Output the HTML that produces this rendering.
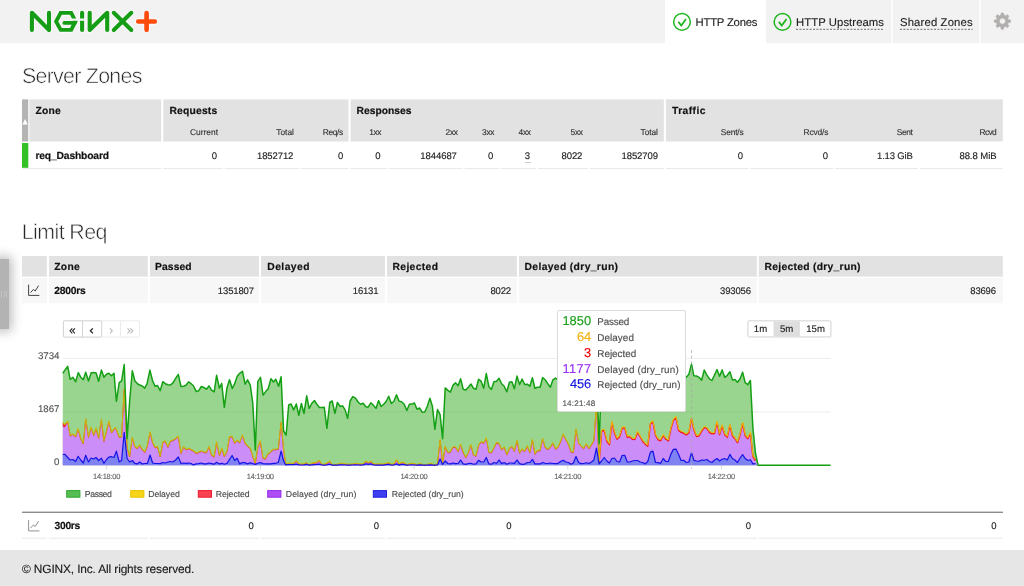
<!DOCTYPE html>
<html lang="en"><head><meta charset="utf-8"><title>NGINX Plus Dashboard</title>
<style>
html,body{margin:0;padding:0;}
body{width:1024px;height:586px;overflow:hidden;position:relative;background:#fff;font-family:"Liberation Sans",sans-serif;}
.a{position:absolute;}
.t{position:absolute;white-space:pre;text-rendering:geometricPrecision;font-family:"Liberation Sans",sans-serif;}
.chart{position:absolute;left:0;top:0;}

</style></head>
<body>
<!-- header -->
<div class="a" style="left:0;top:0;width:1024px;height:43px;background:#f2f2f2;"></div>
<div class="a" style="left:665.3px;top:0;width:101.2px;height:43px;background:#fff;"></div>
<div class="a" style="left:891.2px;top:0;width:2px;height:42.5px;background:#fbfbfb;"></div>
<div class="a" style="left:979.3px;top:0;width:2px;height:42.5px;background:#fbfbfb;"></div>
<!-- logo -->
<svg class="a" style="left:0;top:0" width="180" height="43" viewBox="0 0 180 43">
<g fill="none" stroke="#fafafa" stroke-width="6" stroke-linecap="round" stroke-linejoin="round" opacity="0.9">
<path d="M31.9 30 V12.8 L49 30 V12.8"/>
<path d="M75.5 21.4 L71.2 12.9 L60.7 12.9 L56.1 21.4 L60.7 29.9 L71.2 29.9 Z"/>
<path d="M82.1 12.7 V30"/>
<path d="M89.7 12.8 V30 L107.2 12.8 V30"/>
<path d="M113.8 12.8 L131.3 30 M131.3 12.8 L113.8 30"/>
<path d="M138.3 21.5 H154.8 M146.6 13.2 V29.8" stroke-width="6.6"/>
</g>
<g fill="none" stroke="#159d15" stroke-width="4.1" stroke-linecap="round" stroke-linejoin="round">
<path d="M31.9 30 V12.8 L49 30 V12.8"/>
<path d="M75.5 21.4 L71.2 12.9 L60.7 12.9 L56.1 21.4 L60.7 29.9 L71.2 29.9 Z" stroke-linejoin="miter" stroke-width="3.9"/>
<path d="M82.1 12.7 V30"/>
</g>
<rect x="69" y="18.5" width="17.5" height="2.3" fill="#f2f2f2"/>
<g fill="none" stroke="#159d15" stroke-width="4.1" stroke-linecap="round" stroke-linejoin="round">
<path d="M64.4 22.9 H74.6" stroke-width="3.9"/>
<path d="M89.7 12.8 V30 L107.2 12.8 V30"/>
<path d="M113.8 12.8 L131.3 30 M131.3 12.8 L113.8 30"/>
</g>
<g fill="none" stroke="#ff4b0c" stroke-width="4.7" stroke-linecap="round">
<path d="M138.3 21.5 H154.8 M146.6 13.2 V29.8"/>
</g>
</svg>
<!-- tab icons -->
<svg class="a" style="left:665px;top:8px" width="140" height="30" viewBox="665 8 140 30">
<g fill="none" stroke="#1cb51c">
<circle cx="682" cy="21.9" r="8.35" stroke-width="1.5"/>
<path d="M678.4 21.9 L681.3 25.5 L686 18.9" stroke-width="1.75" stroke-linecap="butt" stroke-linejoin="miter"/>
<circle cx="782.5" cy="21.9" r="8.35" stroke-width="1.5"/>
<path d="M778.9 21.9 L781.8 25.5 L786.5 18.9" stroke-width="1.75" stroke-linecap="butt" stroke-linejoin="miter"/>
</g>
</svg>
<svg class="a" style="left:790px;top:26px" width="200" height="6" viewBox="790 26 200 6"><path d="M796 29.3 H884 M900 29.3 H972.6" stroke="#6c6c6c" stroke-width="1" stroke-dasharray="2 1.4" fill="none"/></svg>

<!-- gear -->
<svg class="a" style="left:991px;top:10px" width="22" height="22" viewBox="-11.4 -11.15 22 22">
<path fill="#b1aeae" stroke="#b1aeae" stroke-width="0.7" stroke-linejoin="round" fill-rule="evenodd" d="M-1.60 -5.78 L-1.06 -8.08 L1.06 -8.08 L1.60 -5.78 L2.95 -5.22 L4.96 -6.47 L6.47 -4.96 L5.22 -2.95 L5.78 -1.60 L8.08 -1.06 L8.08 1.06 L5.78 1.60 L5.22 2.95 L6.47 4.96 L4.96 6.47 L2.95 5.22 L1.60 5.78 L1.06 8.08 L-1.06 8.08 L-1.60 5.78 L-2.95 5.22 L-4.96 6.47 L-6.47 4.96 L-5.22 2.95 L-5.78 1.60 L-8.08 1.06 L-8.08 -1.06 L-5.78 -1.60 L-5.22 -2.95 L-6.47 -4.96 L-4.96 -6.47 L-2.95 -5.22 Z M0 -3.05 A3.05 3.05 0 1 0 0 3.05 A3.05 3.05 0 1 0 0 -3.05 Z"/>
</svg>

<!-- side handle -->
<div class="a" style="left:-4px;top:259px;width:12.5px;height:69.5px;background:#b3b3b3;box-shadow:0 0 12px 2px rgba(0,0,0,0.3);"></div>
<div class="a" style="left:1px;top:290.5px;width:1px;height:7px;background:#c2c2c2;"></div>
<div class="a" style="left:3.5px;top:290.5px;width:1px;height:7px;background:#c2c2c2;"></div>
<div class="a" style="left:6px;top:290.5px;width:1px;height:7px;background:#c2c2c2;"></div>

<!-- tables (boxes) -->
<svg class="a" style="left:0;top:0" width="1024" height="586" viewBox="0 0 1024 586">
<rect x="22" y="99.4" width="6.3" height="42.1" fill="#b4b4b4"/>
<rect x="28.3" y="99.4" width="1.6" height="42.1" fill="#eeeeee"/>
<rect x="29.9" y="99.4" width="131.3" height="42.1" fill="#e2e2e2"/>
<rect x="163.3" y="99.4" width="185.2" height="42.1" fill="#e2e2e2"/>
<rect x="350.6" y="99.4" width="313.2" height="42.1" fill="#e2e2e2"/>
<rect x="665.9" y="99.4" width="336.9" height="42.1" fill="#e2e2e2"/>
<rect x="22" y="143" width="6.3" height="24.8" fill="#35c026"/>
<rect x="23" y="168" width="138.3" height="1" fill="#e9e9e9"/>
<rect x="163.3" y="168" width="59.5" height="1" fill="#e9e9e9"/>
<rect x="224.8" y="168" width="73.9" height="1" fill="#e9e9e9"/>
<rect x="300.7" y="168" width="47.8" height="1" fill="#e9e9e9"/>
<rect x="350.5" y="168" width="36" height="1" fill="#e9e9e9"/>
<rect x="388.5" y="168" width="74.1" height="1" fill="#e9e9e9"/>
<rect x="464.6" y="168" width="34.8" height="1" fill="#e9e9e9"/>
<rect x="501.4" y="168" width="34.5" height="1" fill="#e9e9e9"/>
<rect x="537.9" y="168" width="49.9" height="1" fill="#e9e9e9"/>
<rect x="589.8" y="168" width="74" height="1" fill="#e9e9e9"/>
<rect x="665.8" y="168" width="82.7" height="1" fill="#e9e9e9"/>
<rect x="750.5" y="168" width="82.8" height="1" fill="#e9e9e9"/>
<rect x="835.3" y="168" width="82.6" height="1" fill="#e9e9e9"/>
<rect x="919.9" y="168" width="82.7" height="1" fill="#e9e9e9"/>
<rect x="22" y="256" width="24.8" height="20.65" fill="#e2e2e2"/>
<rect x="49" y="256" width="98.8" height="20.65" fill="#e2e2e2"/>
<rect x="149.9" y="256" width="109.1" height="20.65" fill="#e2e2e2"/>
<rect x="261.1" y="256" width="123.8" height="20.65" fill="#e2e2e2"/>
<rect x="387" y="256" width="129.9" height="20.65" fill="#e2e2e2"/>
<rect x="519" y="256" width="237.85" height="20.65" fill="#e2e2e2"/>
<rect x="758.7" y="256" width="244.1" height="20.65" fill="#e2e2e2"/>
<rect x="22" y="277.95" width="24.8" height="25.2" fill="#f7f7f7"/>
<rect x="49" y="277.95" width="98.8" height="25.2" fill="#f7f7f7"/>
<rect x="149.9" y="277.95" width="109.1" height="25.2" fill="#f7f7f7"/>
<rect x="261.1" y="277.95" width="123.8" height="25.2" fill="#f7f7f7"/>
<rect x="387" y="277.95" width="129.9" height="25.2" fill="#f7f7f7"/>
<rect x="519" y="277.95" width="237.85" height="25.2" fill="#f7f7f7"/>
<rect x="758.7" y="277.95" width="244.1" height="25.2" fill="#f7f7f7"/>
<rect x="22" y="511.6" width="981" height="1.4" fill="#8c8c8c"/>
<rect x="22" y="537.7" width="24.8" height="1" fill="#e9e9e9"/>
<rect x="49" y="537.7" width="98.8" height="1" fill="#e9e9e9"/>
<rect x="149.9" y="537.7" width="109.1" height="1" fill="#e9e9e9"/>
<rect x="261.1" y="537.7" width="123.8" height="1" fill="#e9e9e9"/>
<rect x="387" y="537.7" width="129.9" height="1" fill="#e9e9e9"/>
<rect x="519" y="537.7" width="237.85" height="1" fill="#e9e9e9"/>
<rect x="758.7" y="537.7" width="244.1" height="1" fill="#e9e9e9"/>
</svg>
<!-- table 1 -->
<svg class="a" style="left:20px;top:116px" width="10" height="10" viewBox="20 116 10 10"><path d="M22.4 124.6 L25.05 118.9 L27.7 124.6 Z" fill="#fff"/></svg>
<!-- row border segments -->

<div class="a" style="left:525.2px;top:161.6px;width:5.8px;height:1px;background:#cdcdcd;"></div>

<!-- limit req table -->
<!-- chart icons -->
<svg class="a" style="left:27px;top:283px" width="14" height="14" viewBox="0 0 14 14"><path d="M1.6 1.6 V12.4 H12.4" fill="none" stroke="#3a3a3a" stroke-width="0.95"/><path d="M3.6 9.6 L6.4 6.4 L8.2 8 L11.6 2.6" fill="none" stroke="#3a3a3a" stroke-width="0.95"/></svg>
<svg class="a" style="left:27px;top:518px" width="14" height="15" viewBox="0 -0.5 14 15"><path d="M1.6 1.6 V12.4 H12.4" fill="none" stroke="#8c8c8c" stroke-width="0.95"/><path d="M3.6 9.6 L6.4 6.4 L8.2 8 L11.6 2.6" fill="none" stroke="#8c8c8c" stroke-width="0.95"/></svg>

<!-- chart -->
<svg class="chart" width="1024" height="586" viewBox="0 0 1024 586">
<line x1="62.5" x2="830.6" y1="358.4" y2="358.4" stroke="#eeeeee" stroke-width="1"/>
<line x1="62.5" x2="830.6" y1="411.9" y2="411.9" stroke="#eeeeee" stroke-width="1"/>
<line x1="106.7" x2="106.7" y1="465.5" y2="469.3" stroke="#d9d9d9" stroke-width="1"/>
<line x1="260.4" x2="260.4" y1="465.5" y2="469.3" stroke="#d9d9d9" stroke-width="1"/>
<line x1="414.1" x2="414.1" y1="465.5" y2="469.3" stroke="#d9d9d9" stroke-width="1"/>
<line x1="567.8" x2="567.8" y1="465.5" y2="469.3" stroke="#d9d9d9" stroke-width="1"/>
<line x1="721.5" x2="721.5" y1="465.5" y2="469.3" stroke="#d9d9d9" stroke-width="1"/>
<path d="M62.8 373.3 L65.0 369.9 L67.7 366.4 L70.2 379.3 L72.9 377.3 L75.6 381.7 L78.3 372.6 L80.8 377.3 L83.3 379.8 L85.7 372.3 L88.5 380.9 L91.2 372.8 L93.7 372.6 L96.1 373.0 L98.6 381.2 L101.4 370.1 L103.9 377.3 L106.5 374.3 L108.8 373.3 L111.5 375.8 L114.0 373.3 L116.4 401.3 L119.2 382.7 L121.6 380.9 L124.2 364.6 L127.1 438.7 L129.7 400.5 L132.3 370.8 L134.8 380.7 L137.7 384.0 L139.7 385.0 L141.7 385.7 L144.7 388.2 L147.1 383.7 L149.9 370.1 L152.6 380.7 L155.1 386.2 L157.5 385.5 L160.2 390.6 L162.8 381.7 L165.4 383.7 L167.9 384.7 L170.4 384.9 L172.8 383.2 L175.6 378.3 L178.3 374.3 L181.0 386.5 L183.5 386.2 L186.0 385.2 L188.5 381.9 L191.2 383.7 L193.4 385.7 L196.1 391.4 L198.6 390.8 L201.3 386.5 L203.8 387.5 L206.5 389.2 L209.0 385.9 L211.5 390.1 L214.2 391.8 L216.6 375.3 L219.4 388.2 L221.7 383.4 L224.3 407.5 L227.0 387.7 L229.5 379.8 L232.3 388.5 L234.7 383.7 L237.2 376.3 L239.7 373.3 L242.5 371.3 L245.1 384.2 L247.6 379.8 L250.3 385.2 L252.8 403.5 L255.3 450.1 L257.8 381.7 L260.5 377.3 L263.1 395.1 L265.7 391.6 L268.2 388.7 L270.9 378.8 L273.5 381.9 L275.8 379.3 L278.6 386.2 L281.1 376.8 L283.6 431.0 L286.1 435.2 L288.7 405.0 L291.1 404.0 L293.6 409.9 L296.3 404.0 L298.8 415.4 L301.4 403.5 L304.0 413.4 L306.7 395.8 L309.2 408.5 L311.7 403.5 L314.4 400.5 L316.9 404.3 L319.4 407.5 L321.8 407.5 L324.3 407.3 L326.9 428.3 L329.8 402.5 L332.2 401.0 L334.9 413.4 L337.4 402.5 L340.2 406.5 L342.6 405.8 L345.1 409.9 L347.6 418.4 L350.1 401.0 L352.8 396.6 L355.5 398.1 L358.1 402.0 L360.6 404.3 L363.2 403.3 L365.8 406.7 L368.1 407.2 L370.9 402.8 L373.4 405.2 L376.0 408.4 L378.6 400.6 L381.1 406.5 L383.7 404.3 L386.3 401.3 L388.7 396.3 L391.4 403.5 L393.9 401.3 L396.5 394.9 L399.1 401.1 L401.6 401.8 L404.2 404.3 L406.8 410.5 L409.4 404.3 L411.9 404.1 L414.4 403.0 L417.0 409.2 L419.6 408.0 L422.1 412.2 L424.7 412.0 L427.3 406.2 L429.9 398.3 L432.4 406.2 L434.9 429.3 L437.5 409.5 L440.1 414.6 L442.6 438.7 L445.2 387.9 L447.8 390.4 L450.4 392.1 L452.9 385.4 L455.5 382.8 L458.1 385.7 L460.6 378.8 L463.2 389.2 L465.8 390.1 L468.4 387.2 L470.9 384.0 L473.4 388.2 L476.0 389.2 L478.6 379.3 L481.1 381.2 L483.7 388.2 L486.3 373.6 L488.9 386.7 L491.4 389.5 L493.9 381.7 L496.5 381.2 L499.1 378.3 L501.6 383.7 L504.2 386.2 L506.8 391.8 L509.4 382.2 L511.9 381.7 L514.4 388.7 L517.0 376.1 L519.6 384.5 L522.1 379.1 L524.7 384.5 L527.3 384.2 L529.9 386.2 L532.4 377.8 L534.9 388.2 L537.5 387.2 L540.1 387.2 L542.6 377.6 L545.2 379.8 L547.8 383.7 L550.4 387.2 L552.9 379.8 L555.5 378.1 L558.1 379.8 L560.6 383.7 L563.2 378.8 L565.8 384.7 L568.4 382.7 L570.9 379.8 L573.4 384.7 L576.0 377.8 L578.6 383.7 L581.1 384.7 L583.7 380.7 L586.3 382.7 L588.9 384.7 L591.5 379.8 L593.9 378.8 L596.5 366.9 L599.1 443.7 L601.6 374.8 L604.2 372.8 L606.8 377.8 L609.4 379.8 L611.9 371.8 L614.4 374.8 L617.0 377.8 L619.6 375.8 L622.1 372.8 L624.7 371.8 L627.3 376.8 L629.9 376.3 L632.4 377.8 L634.9 377.3 L637.5 373.8 L640.1 374.8 L642.6 376.8 L645.2 378.8 L647.8 377.8 L650.4 369.9 L652.9 368.9 L655.5 373.8 L658.1 374.8 L660.6 372.8 L663.2 375.8 L665.8 377.8 L668.4 376.3 L670.9 373.8 L673.4 370.8 L676.0 372.8 L678.6 377.8 L681.1 378.8 L683.7 378.3 L686.3 377.3 L688.9 374.3 L691.5 364.1 L693.9 375.8 L696.5 376.0 L699.1 377.3 L701.6 380.2 L704.2 370.1 L706.8 374.8 L709.4 378.8 L711.9 380.5 L714.4 375.3 L717.0 369.6 L719.6 376.3 L722.1 369.9 L724.7 377.3 L727.3 375.3 L729.9 371.8 L732.4 379.9 L734.9 379.6 L737.5 382.2 L740.1 378.8 L742.6 372.3 L745.2 382.7 L747.8 384.7 L750.4 380.5 L752.9 428.0 L755.5 453.5 L758.1 465.2 L758.1 465.2 L62.8 465.2 Z" fill="#99d58f"/>
<path d="M62.8 423.4 L65.0 425.3 L67.7 421.9 L70.2 436.2 L72.9 434.8 L75.6 437.2 L78.1 429.3 L80.8 439.2 L83.3 444.1 L85.7 419.4 L88.5 437.7 L91.0 427.8 L93.7 435.7 L96.1 428.8 L98.6 438.7 L101.4 419.9 L103.9 441.7 L106.5 431.8 L108.8 421.9 L111.5 433.3 L114.0 429.8 L115.6 428.3 L119.2 437.7 L121.6 437.2 L124.2 389.7 L127.1 448.1 L129.6 457.0 L132.3 438.2 L134.8 447.1 L137.2 449.1 L139.7 445.6 L142.2 450.1 L144.9 452.6 L147.4 446.1 L150.1 432.8 L152.6 443.2 L155.1 448.1 L157.5 447.1 L160.2 457.0 L162.8 443.2 L165.1 441.7 L167.9 447.6 L170.4 441.7 L172.8 441.0 L175.6 439.2 L178.3 437.0 L181.0 453.9 L183.5 447.3 L186.0 450.3 L188.5 449.1 L191.2 450.1 L193.4 451.6 L196.1 453.6 L198.6 452.9 L201.3 451.6 L203.8 452.6 L206.5 453.1 L209.0 447.1 L211.5 455.5 L214.2 457.2 L216.6 442.7 L219.4 455.8 L221.9 448.9 L224.3 456.8 L227.0 452.1 L229.5 437.4 L232.1 437.2 L234.7 443.7 L237.2 441.0 L239.7 443.2 L242.5 435.7 L245.1 443.7 L247.6 446.6 L250.3 449.1 L252.8 457.0 L255.3 464.0 L257.8 448.1 L260.3 441.7 L262.9 458.5 L265.4 459.5 L267.9 454.6 L270.6 452.6 L273.3 450.1 L275.8 449.9 L278.3 449.6 L281.1 422.9 L283.5 449.1 L285.7 464.9 L288.7 464.0 L291.1 464.1 L293.6 464.0 L296.3 461.5 L298.8 464.4 L301.4 464.8 L304.0 464.4 L306.5 463.5 L309.2 465.4 L311.7 464.0 L314.4 463.5 L316.9 463.0 L319.4 461.2 L321.8 464.9 L324.3 465.1 L326.9 464.0 L329.5 462.0 L332.2 465.1 L334.9 465.4 L337.4 464.9 L340.2 464.1 L342.6 464.1 L345.1 464.6 L347.6 464.9 L350.1 464.9 L352.8 464.6 L355.5 464.1 L358.1 464.6 L360.6 464.8 L363.2 464.4 L365.8 462.0 L368.4 463.5 L370.9 462.0 L373.4 464.4 L376.0 464.9 L378.6 464.8 L381.1 464.6 L383.7 464.9 L386.3 464.0 L388.9 463.5 L391.4 465.1 L393.9 464.4 L396.5 460.5 L399.1 464.8 L401.6 463.0 L404.2 463.5 L406.8 465.7 L409.4 464.4 L411.9 464.1 L414.4 464.4 L417.0 465.7 L419.6 464.1 L422.1 465.1 L424.7 465.7 L427.3 465.4 L429.9 464.1 L432.4 464.8 L434.9 465.7 L437.5 464.4 L440.1 440.2 L442.6 464.4 L445.2 447.1 L447.8 453.1 L450.4 452.6 L452.9 447.6 L455.5 447.6 L458.1 452.1 L460.6 444.9 L463.2 453.1 L465.8 458.0 L468.4 453.1 L470.9 445.3 L473.4 455.2 L476.0 456.5 L478.6 445.6 L481.1 442.4 L483.7 443.7 L486.3 438.7 L488.9 452.9 L491.4 453.1 L493.9 448.6 L496.5 443.2 L499.1 444.1 L501.6 450.3 L504.2 447.6 L506.8 455.2 L509.4 449.1 L511.9 446.9 L514.4 451.6 L517.0 441.0 L519.6 453.6 L522.1 449.6 L524.7 451.9 L527.3 446.6 L529.9 453.1 L532.4 440.2 L534.9 454.6 L537.5 451.1 L540.1 451.1 L542.6 439.2 L545.2 448.1 L547.8 449.9 L550.4 447.6 L552.9 443.7 L555.5 449.6 L558.1 447.6 L560.6 442.2 L563.2 434.8 L565.8 440.2 L568.4 444.6 L570.9 452.1 L573.4 452.9 L576.0 429.8 L578.6 443.7 L581.1 446.6 L583.7 449.1 L586.3 444.6 L588.9 449.1 L591.5 445.1 L593.9 441.2 L596.5 404.6 L599.1 463.0 L601.6 431.8 L604.2 430.8 L606.8 441.7 L609.4 445.1 L611.9 422.9 L614.4 433.3 L617.0 439.7 L619.6 437.2 L622.1 428.8 L624.7 428.3 L627.3 437.7 L629.9 437.2 L632.4 439.7 L634.9 440.0 L637.5 432.8 L640.1 437.2 L642.6 441.7 L645.2 444.6 L647.8 446.6 L650.4 424.4 L652.9 422.4 L655.5 435.7 L658.1 440.2 L660.6 441.2 L663.2 436.0 L665.8 439.7 L668.4 441.4 L670.9 429.3 L673.4 420.9 L676.0 417.9 L678.6 430.8 L681.1 432.8 L683.7 433.8 L686.3 435.4 L688.9 433.3 L691.5 418.9 L693.9 430.3 L696.5 437.0 L699.1 436.2 L701.6 431.8 L704.2 428.1 L706.8 428.8 L709.4 432.8 L711.9 434.2 L714.4 434.1 L717.0 422.9 L719.6 435.0 L722.1 426.3 L724.7 435.2 L727.3 437.7 L729.9 425.8 L732.4 436.2 L734.9 439.2 L737.5 443.2 L740.1 435.2 L742.6 423.9 L745.2 436.2 L747.8 439.2 L750.4 433.8 L752.9 457.0 L755.5 461.0 L758.1 465.5 L758.1 465.2 L62.8 465.2 Z" fill="#cb8df7"/>
<path d="M62.8 454.5 L65.0 454.4 L67.7 457.5 L70.2 460.0 L72.9 459.5 L75.6 461.5 L78.1 456.3 L80.8 460.0 L83.3 463.0 L85.7 455.3 L88.5 462.0 L91.0 458.0 L93.7 459.0 L96.1 457.5 L98.6 460.5 L101.4 458.2 L103.9 463.3 L106.5 459.5 L108.8 457.2 L111.5 456.7 L114.0 457.5 L116.4 451.1 L119.2 462.0 L121.6 460.5 L124.2 432.3 L127.1 458.5 L129.6 462.0 L132.3 460.5 L134.8 463.3 L137.2 463.9 L139.7 462.0 L142.2 463.9 L144.9 463.5 L147.4 463.5 L150.1 455.0 L152.6 463.0 L155.1 463.3 L157.5 463.5 L160.2 463.6 L162.8 462.5 L165.1 463.0 L167.9 462.0 L170.4 461.5 L172.8 462.0 L175.6 460.0 L178.3 457.0 L181.0 463.5 L183.5 463.0 L186.0 463.3 L188.5 463.0 L191.2 463.5 L193.4 464.9 L196.1 463.9 L198.6 463.6 L201.3 463.0 L203.8 463.9 L206.5 463.9 L209.0 463.0 L211.5 463.6 L214.2 464.2 L216.6 462.3 L219.4 463.9 L221.9 463.3 L224.3 464.2 L227.0 463.3 L229.5 459.5 L232.1 455.5 L234.7 460.5 L237.2 458.3 L239.7 463.9 L242.5 462.5 L245.1 462.7 L247.6 463.9 L250.3 462.7 L252.8 463.6 L255.3 464.4 L257.8 463.3 L260.3 462.5 L262.9 463.6 L265.4 463.9 L267.9 463.9 L270.6 463.8 L273.3 463.3 L275.8 463.3 L278.3 462.5 L281.1 451.1 L283.5 460.5 L285.7 464.9 L288.7 464.6 L291.1 464.7 L293.6 464.6 L296.3 464.1 L298.8 464.9 L301.4 465.0 L304.0 464.9 L306.5 464.4 L309.2 465.2 L311.7 464.8 L314.4 464.6 L316.9 464.4 L319.4 464.1 L321.8 465.0 L324.3 465.1 L326.9 464.8 L329.5 464.2 L332.2 465.1 L334.9 465.2 L337.4 465.1 L340.2 464.9 L342.6 464.9 L345.1 465.0 L347.6 465.1 L350.1 465.1 L352.8 465.0 L355.5 464.9 L358.1 465.0 L360.6 465.1 L363.2 464.9 L365.8 463.9 L368.4 464.4 L370.9 463.9 L373.4 465.0 L376.0 465.2 L378.6 465.1 L381.1 465.0 L383.7 465.2 L386.3 464.6 L388.9 464.4 L391.4 465.2 L393.9 465.0 L396.5 463.9 L399.1 465.1 L401.6 464.4 L404.2 464.6 L406.8 465.2 L409.4 465.0 L411.9 464.9 L414.4 465.0 L417.0 465.2 L419.6 464.9 L422.1 465.2 L424.7 465.2 L427.3 465.2 L429.9 464.9 L432.4 465.1 L434.9 465.2 L437.5 465.0 L440.1 459.0 L442.6 464.4 L445.2 461.0 L447.8 463.5 L450.4 463.9 L452.9 463.0 L455.5 463.6 L458.1 463.5 L460.6 460.0 L463.2 463.9 L465.8 464.4 L468.4 463.5 L470.9 463.3 L473.4 464.2 L476.0 463.9 L478.6 460.3 L481.1 462.0 L483.7 462.0 L486.3 457.5 L488.9 463.9 L491.4 464.2 L493.9 462.5 L496.5 463.3 L499.1 460.0 L501.6 463.6 L504.2 462.5 L506.8 464.2 L509.4 463.0 L511.9 463.0 L514.4 463.3 L517.0 460.0 L519.6 463.6 L522.1 464.4 L524.7 464.2 L527.3 462.5 L529.9 462.5 L532.4 459.3 L534.9 463.9 L537.5 463.9 L540.1 463.9 L542.6 462.5 L545.2 463.3 L547.8 463.5 L550.4 463.0 L552.9 463.5 L555.5 463.6 L558.1 463.3 L560.6 461.5 L563.2 460.3 L565.8 462.0 L568.4 462.5 L570.9 464.2 L573.4 463.0 L576.0 456.5 L578.6 462.5 L581.1 463.6 L583.7 463.5 L586.3 462.7 L588.9 463.5 L591.5 462.0 L593.9 460.0 L596.5 448.1 L599.1 463.9 L601.6 461.0 L604.2 457.5 L606.8 461.0 L609.4 463.0 L611.9 458.5 L614.4 458.0 L617.0 461.5 L619.6 462.0 L622.1 455.5 L624.7 455.3 L627.3 462.0 L629.9 462.0 L632.4 461.0 L634.9 460.5 L637.5 460.5 L640.1 462.0 L642.6 462.5 L645.2 463.9 L647.8 461.5 L650.4 452.1 L652.9 451.1 L655.5 462.5 L658.1 462.7 L660.6 463.3 L663.2 458.5 L665.8 461.5 L668.4 461.5 L670.9 454.1 L673.4 449.4 L676.0 449.1 L678.6 454.5 L681.1 460.5 L683.7 460.3 L686.3 462.5 L688.9 462.0 L691.5 452.6 L693.9 460.3 L696.5 461.0 L699.1 461.3 L701.6 460.0 L704.2 460.3 L706.8 459.5 L709.4 461.5 L711.9 462.5 L714.4 460.3 L717.0 458.5 L719.6 461.0 L722.1 459.3 L724.7 458.5 L727.3 460.0 L729.9 454.4 L732.4 458.5 L734.9 460.0 L737.5 462.5 L740.1 458.0 L742.6 454.7 L745.2 458.5 L747.8 460.5 L750.4 459.7 L752.9 463.9 L755.5 463.5 L758.1 465.0 L758.1 465.2 L62.8 465.2 Z" fill="#7f82f1"/>
<path d="M62.8 423.1 L64.95 425.0 L67.72 421.6 L67.72 422.2 L64.95 427.6 L62.8 426.8 Z" fill="#f22a3e"/>
<path d="M62.8 423.3 L65.0 425.2 L67.7 421.8 L70.2 436.1 L72.9 434.6 L75.6 437.1 L78.1 429.2 L80.8 439.1 L83.3 444.0 L85.7 419.3 L88.5 437.6 L91.0 427.7 L93.7 435.6 L96.1 428.7 L98.6 438.6 L101.4 419.8 L103.9 441.6 L106.5 431.7 L108.8 421.8 L111.5 433.2 L114.0 429.7 L115.6 428.2 L119.2 437.6 L121.6 437.1 L124.2 389.6 L127.1 448.0 L129.6 456.9 L132.3 438.1 L134.8 447.0 L137.2 449.0 L139.7 445.5 L142.2 450.0 L144.9 452.5 L147.4 446.0 L150.1 432.7 L152.6 443.1 L155.1 448.0 L157.5 447.0 L160.2 456.9 L162.8 443.1 L165.1 441.6 L167.9 447.5 L170.4 441.6 L172.8 440.9 L175.6 439.1 L178.3 436.9 L181.0 453.8 L183.5 447.2 L186.0 450.2 L188.5 449.0 L191.2 450.0 L193.4 451.5 L196.1 453.5 L198.6 452.8 L201.3 451.5 L203.8 452.5 L206.5 453.0 L209.0 447.0 L211.5 455.4 L214.2 457.1 L216.6 442.6 L219.4 455.7 L221.9 448.8 L224.3 456.7 L227.0 452.0 L229.5 437.3 L232.1 437.1 L234.7 443.6 L237.2 440.9 L239.7 443.1 L242.5 435.6 L245.1 443.6 L247.6 446.5 L250.3 449.0 L252.8 456.9 L255.3 463.9 L257.8 448.0 L260.3 441.6 L262.9 458.4 L265.4 459.4 L267.9 454.4 L270.6 452.5 L273.3 450.0 L275.8 449.8 L278.3 449.5 L281.1 422.8 L283.5 449.0 L285.7 464.8 L288.7 463.9 L291.1 464.0 L293.6 463.9 L296.3 461.4 L298.8 464.3 L301.4 464.6 L304.0 464.3 L306.5 463.4 L309.2 465.3 L311.7 463.9 L314.4 463.4 L316.9 462.9 L319.4 461.1 L321.8 464.8 L324.3 465.0 L326.9 463.9 L329.5 461.9 L332.2 465.0 L334.9 465.3 L337.4 464.8 L340.2 464.0 L342.6 464.0 L345.1 464.4 L347.6 464.8 L350.1 464.8 L352.8 464.4 L355.5 464.0 L358.1 464.4 L360.6 464.6 L363.2 464.3 L365.8 461.9 L368.4 463.4 L370.9 461.9 L373.4 464.3 L376.0 464.8 L378.6 464.6 L381.1 464.4 L383.7 464.8 L386.3 463.9 L388.9 463.4 L391.4 465.0 L393.9 464.3 L396.5 460.4 L399.1 464.6 L401.6 462.9 L404.2 463.4 L406.8 465.6 L409.4 464.3 L411.9 464.0 L414.4 464.3 L417.0 465.6 L419.6 464.0 L422.1 465.0 L424.7 465.6 L427.3 465.3 L429.9 464.0 L432.4 464.6 L434.9 465.6 L437.5 464.3 L440.1 440.1 L442.6 464.3 L445.2 447.0 L447.8 453.0 L450.4 452.5 L452.9 447.5 L455.5 447.5 L458.1 452.0 L460.6 444.8 L463.2 453.0 L465.8 457.9 L468.4 453.0 L470.9 445.2 L473.4 455.1 L476.0 456.4 L478.6 445.5 L481.1 442.3 L483.7 443.6 L486.3 438.6 L488.9 452.8 L491.4 453.0 L493.9 448.5 L496.5 443.1 L499.1 444.0 L501.6 450.2 L504.2 447.5 L506.8 455.1 L509.4 449.0 L511.9 446.8 L514.4 451.5 L517.0 440.9 L519.6 453.5 L522.1 449.5 L524.7 451.8 L527.3 446.5 L529.9 453.0 L532.4 440.1 L534.9 454.4 L537.5 451.0 L540.1 451.0 L542.6 439.1 L545.2 448.0 L547.8 449.8 L550.4 447.5 L552.9 443.6 L555.5 449.5 L558.1 447.5 L560.6 442.1 L563.2 434.6 L565.8 440.1 L568.4 444.5 L570.9 452.0 L573.4 452.8 L576.0 429.7 L578.6 443.6 L581.1 446.5 L583.7 449.0 L586.3 444.5 L588.9 449.0 L591.5 445.0 L593.9 441.1 L596.5 404.4 L599.1 462.9" fill="none" stroke="#f0203c" stroke-width="0.8" stroke-linejoin="round"/>
<path d="M599.1 462.5 L601.6 431.3 L604.2 430.3 L606.8 441.2 L609.4 444.6 L611.9 422.4 L614.4 432.8 L617.0 439.2 L619.6 436.7 L622.1 428.3 L624.7 427.8 L627.3 437.2 L629.9 436.7 L632.4 439.2 L634.9 439.5 L637.5 432.3 L640.1 436.7 L642.6 441.2 L645.2 444.1 L647.8 446.1 L650.4 423.9 L652.9 421.9 L655.5 435.2 L658.1 439.7 L660.6 440.7 L663.2 435.5 L665.8 439.2 L668.4 440.9 L670.9 428.8 L673.4 420.4 L676.0 417.4 L678.6 430.3 L681.1 432.3 L683.7 433.3 L686.3 434.9 L688.9 432.8 L691.5 418.4 L693.9 429.8 L696.5 436.5 L699.1 435.7 L701.6 431.3 L704.2 427.6 L706.8 428.3 L709.4 432.3 L711.9 433.8 L714.4 433.6 L717.0 422.4 L719.6 434.5 L722.1 425.8 L724.7 434.7 L727.3 437.2 L729.9 425.3 L732.4 435.7 L734.9 438.7 L737.5 442.7 L740.1 434.7 L742.6 423.4 L745.2 435.7 L747.8 438.7 L750.4 433.3 L752.9 456.5 L755.5 460.5" fill="none" stroke="#f4142e" stroke-width="1.5" stroke-linejoin="round"/>
<path d="M62.8 422.5 L65.0 424.5 L67.7 421.0 L70.2 435.4 L72.9 433.9 L75.6 436.4 L78.1 428.4 L80.8 438.3 L83.3 443.3 L85.7 418.5 L88.5 436.9 L91.0 427.0 L93.7 434.9 L96.1 428.0 L98.6 437.9 L101.4 419.0 L103.9 440.8 L106.5 430.9 L108.8 421.0 L111.5 432.4 L114.0 428.9 L115.6 427.5 L119.2 436.9 L121.6 436.4 L124.2 388.8 L127.1 447.3 L129.6 456.2 L132.3 437.4 L134.8 446.3 L137.2 448.2 L139.7 444.8 L142.2 449.2 L144.9 451.7 L147.4 445.3 L150.1 431.9 L152.6 442.3 L155.1 447.3 L157.5 446.3 L160.2 456.2 L162.8 442.3 L165.1 440.8 L167.9 446.8 L170.4 440.8 L172.8 440.1 L175.6 438.3 L178.3 436.2 L181.0 453.0 L183.5 446.5 L186.0 449.4 L188.5 448.2 L191.2 449.2 L193.4 450.7 L196.1 452.7 L198.6 452.0 L201.3 450.7 L203.8 451.7 L206.5 452.2 L209.0 446.3 L211.5 454.7 L214.2 456.4 L216.6 441.8 L219.4 455.0 L221.9 448.1 L224.3 456.0 L227.0 451.2 L229.5 436.6 L232.1 436.4 L234.7 442.8 L237.2 440.1 L239.7 442.3 L242.5 434.9 L245.1 442.8 L247.6 445.8 L250.3 448.2 L252.8 456.2 L255.3 463.1 L257.8 447.3 L260.3 440.8 L262.9 457.7 L265.4 458.6 L267.9 453.7 L270.6 451.7 L273.3 449.2 L275.8 449.0 L278.3 448.8 L281.1 422.0 L283.5 448.2 L285.7 464.1 L288.7 463.1 L291.1 463.3 L293.6 463.1 L296.3 460.6 L298.8 463.6 L301.4 463.9 L304.0 463.6 L306.5 462.6 L309.2 464.6 L311.7 463.1 L314.4 462.6 L316.9 462.1 L319.4 460.3 L321.8 464.1 L324.3 464.3 L326.9 463.1 L329.5 461.1 L332.2 464.3 L334.9 464.6 L337.4 464.1 L340.2 463.3 L342.6 463.3 L345.1 463.7 L347.6 464.1 L350.1 464.1 L352.8 463.7 L355.5 463.3 L358.1 463.7 L360.6 463.9 L363.2 463.6 L365.8 461.1 L368.4 462.6 L370.9 461.1 L373.4 463.6 L376.0 464.1 L378.6 463.9 L381.1 463.7 L383.7 464.1 L386.3 463.1 L388.9 462.6 L391.4 464.3 L393.9 463.6 L396.5 459.6 L399.1 463.9 L401.6 462.1 L404.2 462.6 L406.8 464.8 L409.4 463.6 L411.9 463.3 L414.4 463.6 L417.0 464.8 L419.6 463.3 L422.1 464.3 L424.7 464.8 L427.3 464.6 L429.9 463.3 L432.4 463.9 L434.9 464.8 L437.5 463.6 L440.1 439.3 L442.6 463.6 L445.2 446.3 L447.8 452.2 L450.4 451.7 L452.9 446.8 L455.5 446.8 L458.1 451.2 L460.6 444.1 L463.2 452.2 L465.8 457.2 L468.4 452.2 L470.9 444.5 L473.4 454.4 L476.0 455.7 L478.6 444.8 L481.1 441.5 L483.7 442.8 L486.3 437.9 L488.9 452.0 L491.4 452.2 L493.9 447.8 L496.5 442.3 L499.1 443.3 L501.6 449.4 L504.2 446.8 L506.8 454.4 L509.4 448.2 L511.9 446.1 L514.4 450.7 L517.0 440.1 L519.6 452.7 L522.1 448.8 L524.7 451.0 L527.3 445.8 L529.9 452.2 L532.4 439.3 L534.9 453.7 L537.5 450.2 L540.1 450.2 L542.6 438.3 L545.2 447.3 L547.8 449.0 L550.4 446.8 L552.9 442.8 L555.5 448.8 L558.1 446.8 L560.6 441.3 L563.2 433.9 L565.8 439.3 L568.4 443.8 L570.9 451.2 L573.4 452.0 L576.0 428.9 L578.6 442.8 L581.1 445.8 L583.7 448.2 L586.3 443.8 L588.9 448.2 L591.5 444.3 L593.9 440.3 L596.5 403.7 L599.1 462.1" fill="none" stroke="#c9b800" stroke-width="1.1" stroke-linejoin="round" opacity="0.95"/>
<path d="M599.1 461.3 L601.6 430.1 L604.2 429.1 L606.8 440.0 L609.4 443.5 L611.9 421.2 L614.4 431.6 L617.0 438.1 L619.6 435.6 L622.1 427.2 L624.7 426.7 L627.3 436.1 L629.9 435.6 L632.4 438.1 L634.9 438.4 L637.5 431.1 L640.1 435.6 L642.6 440.0 L645.2 443.0 L647.8 445.0 L650.4 422.7 L652.9 420.7 L655.5 434.1 L658.1 438.5 L660.6 439.5 L663.2 434.4 L665.8 438.1 L668.4 439.7 L670.9 427.7 L673.4 419.2 L676.0 416.3 L678.6 429.1 L681.1 431.1 L683.7 432.1 L686.3 433.8 L688.9 431.6 L691.5 417.3 L693.9 428.6 L696.5 435.4 L699.1 434.6 L701.6 430.1 L704.2 426.5 L706.8 427.2 L709.4 431.1 L711.9 432.6 L714.4 432.4 L717.0 421.2 L719.6 433.4 L722.1 424.7 L724.7 433.6 L727.3 436.1 L729.9 424.2 L732.4 434.6 L734.9 437.6 L737.5 441.5 L740.1 433.6 L742.6 422.2 L745.2 434.6 L747.8 437.6 L750.4 432.1 L752.9 455.4 L755.5 459.3" fill="none" stroke="#e8c400" stroke-width="1.1" stroke-linejoin="round" opacity="0.92"/>
<path d="M62.8 454.5 L65.0 454.4 L67.7 457.5 L70.2 460.0 L72.9 459.5 L75.6 461.5 L78.1 456.3 L80.8 460.0 L83.3 463.0 L85.7 455.3 L88.5 462.0 L91.0 458.0 L93.7 459.0 L96.1 457.5 L98.6 460.5 L101.4 458.2 L103.9 463.3 L106.5 459.5 L108.8 457.2 L111.5 456.7 L114.0 457.5 L116.4 451.1 L119.2 462.0 L121.6 460.5 L124.2 432.3 L127.1 458.5 L129.6 462.0 L132.3 460.5 L134.8 463.3 L137.2 463.9 L139.7 462.0 L142.2 463.9 L144.9 463.5 L147.4 463.5 L150.1 455.0 L152.6 463.0 L155.1 463.3 L157.5 463.5 L160.2 463.6 L162.8 462.5 L165.1 463.0 L167.9 462.0 L170.4 461.5 L172.8 462.0 L175.6 460.0 L178.3 457.0 L181.0 463.5 L183.5 463.0 L186.0 463.3 L188.5 463.0 L191.2 463.5 L193.4 464.9 L196.1 463.9 L198.6 463.6 L201.3 463.0 L203.8 463.9 L206.5 463.9 L209.0 463.0 L211.5 463.6 L214.2 464.2 L216.6 462.3 L219.4 463.9 L221.9 463.3 L224.3 464.2 L227.0 463.3 L229.5 459.5 L232.1 455.5 L234.7 460.5 L237.2 458.3 L239.7 463.9 L242.5 462.5 L245.1 462.7 L247.6 463.9 L250.3 462.7 L252.8 463.6 L255.3 464.4 L257.8 463.3 L260.3 462.5 L262.9 463.6 L265.4 463.9 L267.9 463.9 L270.6 463.8 L273.3 463.3 L275.8 463.3 L278.3 462.5 L281.1 451.1 L283.5 460.5 L285.7 464.9 L288.7 464.6 L291.1 464.7 L293.6 464.6 L296.3 464.1 L298.8 464.9 L301.4 465.0 L304.0 464.9 L306.5 464.4 L309.2 465.2 L311.7 464.8 L314.4 464.6 L316.9 464.4 L319.4 464.1 L321.8 465.0 L324.3 465.1 L326.9 464.8 L329.5 464.2 L332.2 465.1 L334.9 465.2 L337.4 465.1 L340.2 464.9 L342.6 464.9 L345.1 465.0 L347.6 465.1 L350.1 465.1 L352.8 465.0 L355.5 464.9 L358.1 465.0 L360.6 465.1 L363.2 464.9 L365.8 463.9 L368.4 464.4 L370.9 463.9 L373.4 465.0 L376.0 465.2 L378.6 465.1 L381.1 465.0 L383.7 465.2 L386.3 464.6 L388.9 464.4 L391.4 465.2 L393.9 465.0 L396.5 463.9 L399.1 465.1 L401.6 464.4 L404.2 464.6 L406.8 465.2 L409.4 465.0 L411.9 464.9 L414.4 465.0 L417.0 465.2 L419.6 464.9 L422.1 465.2 L424.7 465.2 L427.3 465.2 L429.9 464.9 L432.4 465.1 L434.9 465.2 L437.5 465.0 L440.1 459.0 L442.6 464.4 L445.2 461.0 L447.8 463.5 L450.4 463.9 L452.9 463.0 L455.5 463.6 L458.1 463.5 L460.6 460.0 L463.2 463.9 L465.8 464.4 L468.4 463.5 L470.9 463.3 L473.4 464.2 L476.0 463.9 L478.6 460.3 L481.1 462.0 L483.7 462.0 L486.3 457.5 L488.9 463.9 L491.4 464.2 L493.9 462.5 L496.5 463.3 L499.1 460.0 L501.6 463.6 L504.2 462.5 L506.8 464.2 L509.4 463.0 L511.9 463.0 L514.4 463.3 L517.0 460.0 L519.6 463.6 L522.1 464.4 L524.7 464.2 L527.3 462.5 L529.9 462.5 L532.4 459.3 L534.9 463.9 L537.5 463.9 L540.1 463.9 L542.6 462.5 L545.2 463.3 L547.8 463.5 L550.4 463.0 L552.9 463.5 L555.5 463.6 L558.1 463.3 L560.6 461.5 L563.2 460.3 L565.8 462.0 L568.4 462.5 L570.9 464.2 L573.4 463.0 L576.0 456.5 L578.6 462.5 L581.1 463.6 L583.7 463.5 L586.3 462.7 L588.9 463.5 L591.5 462.0 L593.9 460.0 L596.5 448.1 L599.1 463.9 L601.6 461.0 L604.2 457.5 L606.8 461.0 L609.4 463.0 L611.9 458.5 L614.4 458.0 L617.0 461.5 L619.6 462.0 L622.1 455.5 L624.7 455.3 L627.3 462.0 L629.9 462.0 L632.4 461.0 L634.9 460.5 L637.5 460.5 L640.1 462.0 L642.6 462.5 L645.2 463.9 L647.8 461.5 L650.4 452.1 L652.9 451.1 L655.5 462.5 L658.1 462.7 L660.6 463.3 L663.2 458.5 L665.8 461.5 L668.4 461.5 L670.9 454.1 L673.4 449.4 L676.0 449.1 L678.6 454.5 L681.1 460.5 L683.7 460.3 L686.3 462.5 L688.9 462.0 L691.5 452.6 L693.9 460.3 L696.5 461.0 L699.1 461.3 L701.6 460.0 L704.2 460.3 L706.8 459.5 L709.4 461.5 L711.9 462.5 L714.4 460.3 L717.0 458.5 L719.6 461.0 L722.1 459.3 L724.7 458.5 L727.3 460.0 L729.9 454.4 L732.4 458.5 L734.9 460.0 L737.5 462.5 L740.1 458.0 L742.6 454.7 L745.2 458.5 L747.8 460.5 L750.4 459.7 L752.9 463.9 L755.5 463.5" fill="none" stroke="#1414e6" stroke-width="1.2" stroke-linejoin="round"/>
<path d="M62.8 373.3 L65.0 369.9 L67.7 366.4 L70.2 379.3 L72.9 377.3 L75.6 381.7 L78.3 372.6 L80.8 377.3 L83.3 379.8 L85.7 372.3 L88.5 380.9 L91.2 372.8 L93.7 372.6 L96.1 373.0 L98.6 381.2 L101.4 370.1 L103.9 377.3 L106.5 374.3 L108.8 373.3 L111.5 375.8 L114.0 373.3 L116.4 401.3 L119.2 382.7 L121.6 380.9 L124.2 364.6 L127.1 438.7 L129.7 400.5 L132.3 370.8 L134.8 380.7 L137.7 384.0 L139.7 385.0 L141.7 385.7 L144.7 388.2 L147.1 383.7 L149.9 370.1 L152.6 380.7 L155.1 386.2 L157.5 385.5 L160.2 390.6 L162.8 381.7 L165.4 383.7 L167.9 384.7 L170.4 384.9 L172.8 383.2 L175.6 378.3 L178.3 374.3 L181.0 386.5 L183.5 386.2 L186.0 385.2 L188.5 381.9 L191.2 383.7 L193.4 385.7 L196.1 391.4 L198.6 390.8 L201.3 386.5 L203.8 387.5 L206.5 389.2 L209.0 385.9 L211.5 390.1 L214.2 391.8 L216.6 375.3 L219.4 388.2 L221.7 383.4 L224.3 407.5 L227.0 387.7 L229.5 379.8 L232.3 388.5 L234.7 383.7 L237.2 376.3 L239.7 373.3 L242.5 371.3 L245.1 384.2 L247.6 379.8 L250.3 385.2 L252.8 403.5 L255.3 450.1 L257.8 381.7 L260.5 377.3 L263.1 395.1 L265.7 391.6 L268.2 388.7 L270.9 378.8 L273.5 381.9 L275.8 379.3 L278.6 386.2 L281.1 376.8 L283.6 431.0 L286.1 435.2 L288.7 405.0 L291.1 404.0 L293.6 409.9 L296.3 404.0 L298.8 415.4 L301.4 403.5 L304.0 413.4 L306.7 395.8 L309.2 408.5 L311.7 403.5 L314.4 400.5 L316.9 404.3 L319.4 407.5 L321.8 407.5 L324.3 407.3 L326.9 428.3 L329.8 402.5 L332.2 401.0 L334.9 413.4 L337.4 402.5 L340.2 406.5 L342.6 405.8 L345.1 409.9 L347.6 418.4 L350.1 401.0 L352.8 396.6 L355.5 398.1 L358.1 402.0 L360.6 404.3 L363.2 403.3 L365.8 406.7 L368.1 407.2 L370.9 402.8 L373.4 405.2 L376.0 408.4 L378.6 400.6 L381.1 406.5 L383.7 404.3 L386.3 401.3 L388.7 396.3 L391.4 403.5 L393.9 401.3 L396.5 394.9 L399.1 401.1 L401.6 401.8 L404.2 404.3 L406.8 410.5 L409.4 404.3 L411.9 404.1 L414.4 403.0 L417.0 409.2 L419.6 408.0 L422.1 412.2 L424.7 412.0 L427.3 406.2 L429.9 398.3 L432.4 406.2 L434.9 429.3 L437.5 409.5 L440.1 414.6 L442.6 438.7 L445.2 387.9 L447.8 390.4 L450.4 392.1 L452.9 385.4 L455.5 382.8 L458.1 385.7 L460.6 378.8 L463.2 389.2 L465.8 390.1 L468.4 387.2 L470.9 384.0 L473.4 388.2 L476.0 389.2 L478.6 379.3 L481.1 381.2 L483.7 388.2 L486.3 373.6 L488.9 386.7 L491.4 389.5 L493.9 381.7 L496.5 381.2 L499.1 378.3 L501.6 383.7 L504.2 386.2 L506.8 391.8 L509.4 382.2 L511.9 381.7 L514.4 388.7 L517.0 376.1 L519.6 384.5 L522.1 379.1 L524.7 384.5 L527.3 384.2 L529.9 386.2 L532.4 377.8 L534.9 388.2 L537.5 387.2 L540.1 387.2 L542.6 377.6 L545.2 379.8 L547.8 383.7 L550.4 387.2 L552.9 379.8 L555.5 378.1 L558.1 379.8 L560.6 383.7 L563.2 378.8 L565.8 384.7 L568.4 382.7 L570.9 379.8 L573.4 384.7 L576.0 377.8 L578.6 383.7 L581.1 384.7 L583.7 380.7 L586.3 382.7 L588.9 384.7 L591.5 379.8 L593.9 378.8 L596.5 366.9 L599.1 443.7 L601.6 374.8 L604.2 372.8 L606.8 377.8 L609.4 379.8 L611.9 371.8 L614.4 374.8 L617.0 377.8 L619.6 375.8 L622.1 372.8 L624.7 371.8 L627.3 376.8 L629.9 376.3 L632.4 377.8 L634.9 377.3 L637.5 373.8 L640.1 374.8 L642.6 376.8 L645.2 378.8 L647.8 377.8 L650.4 369.9 L652.9 368.9 L655.5 373.8 L658.1 374.8 L660.6 372.8 L663.2 375.8 L665.8 377.8 L668.4 376.3 L670.9 373.8 L673.4 370.8 L676.0 372.8 L678.6 377.8 L681.1 378.8 L683.7 378.3 L686.3 377.3 L688.9 374.3 L691.5 364.1 L693.9 375.8 L696.5 376.0 L699.1 377.3 L701.6 380.2 L704.2 370.1 L706.8 374.8 L709.4 378.8 L711.9 380.5 L714.4 375.3 L717.0 369.6 L719.6 376.3 L722.1 369.9 L724.7 377.3 L727.3 375.3 L729.9 371.8 L732.4 379.9 L734.9 379.6 L737.5 382.2 L740.1 378.8 L742.6 372.3 L745.2 382.7 L747.8 384.7 L750.4 380.5 L752.9 428.0 L755.5 453.5 L758.1 465.2 L830.6 465.2" fill="none" stroke="#14a014" stroke-width="1.5" stroke-linejoin="round"/>
<line x1="62.8" x2="758" y1="411.9" y2="411.9" stroke="#000" stroke-width="1" opacity="0.045"/>
<line x1="691.6" x2="691.6" y1="350" y2="469" stroke="#a8a8a8" stroke-width="0.9" stroke-dasharray="3 2.6" opacity="0.85"/>
</svg>

<!-- nav buttons -->
<svg class="a" style="left:0;top:300px" width="1024" height="50" viewBox="0 300 1024 50">
<g fill="#fff" stroke-width="1">
<rect x="63.4" y="320.85" width="76.1" height="16.2" rx="1" stroke="#ebebeb"/>
<line x1="120.6" x2="120.6" y1="320.85" y2="337.05" stroke="#ebebeb"/>
<rect x="63.4" y="320.85" width="38.3" height="16.2" rx="1" stroke="#d3d3d3"/>
<line x1="82.5" x2="82.5" y1="320.85" y2="337.05" stroke="#d3d3d3"/>
<rect x="747.9" y="320.85" width="83" height="16.1" rx="1" stroke="#d2d2d2"/>
</g>
<rect x="773.5" y="321.35" width="26.4" height="15.1" fill="#dedede"/>
<g fill="none" stroke-width="1.05" stroke-linecap="butt" stroke-linejoin="miter">
<path d="M72.3 328.4 L70 330.85 L72.3 333.3 M74.9 328.4 L72.6 330.85 L74.9 333.3" stroke="#222"/>
<path d="M92.9 328.4 L90.4 330.85 L92.9 333.3" stroke="#222" stroke-width="1.25"/>
<path d="M109.9 328.4 L112.3 330.85 L109.9 333.3" stroke="#b5b5b5"/>
<path d="M127.5 328.4 L129.9 330.85 L127.5 333.3 M130.4 328.4 L132.8 330.85 L130.4 333.3" stroke="#b5b5b5"/>
</g></svg>

<!-- legend swatches -->
<svg class="a" style="left:0;top:480px" width="1024" height="30" viewBox="0 480 1024 30">
<rect x="66.7" y="490.6" width="13.2" height="6.6" fill="#58bd52" stroke="#2fa82f" stroke-width="1"/>
<rect x="130.7" y="490.6" width="13.2" height="6.6" fill="#f6d418" stroke="#e9c200" stroke-width="1"/>
<rect x="198.3" y="490.6" width="13.2" height="6.6" fill="#f84252" stroke="#f0182c" stroke-width="1"/>
<rect x="267.7" y="490.6" width="13.2" height="6.6" fill="#af4ef5" stroke="#962aea" stroke-width="1"/>
<rect x="373.3" y="490.6" width="13.2" height="6.6" fill="#3f3ff2" stroke="#1e1ee0" stroke-width="1"/>
</svg>

<!-- tooltip -->
<div class="a" style="left:557px;top:310px;width:129px;height:102px;box-sizing:border-box;background:#fff;border:1px solid #dcdcdc;border-radius:2px;"></div>

<!-- bottom row -->


<!-- footer -->
<div class="a" style="left:0;top:550px;width:1024px;height:36px;background:#e6e6e6;"></div>

<div id="txt" style="position:absolute;left:0;top:0;width:1024px;height:586px;will-change:transform;">
<span class="t" style="left:695.50px;top:15px;font-size:11.3px;line-height:16px;color:#1f1f1f;letter-spacing:-0.203px;-webkit-text-stroke:0.14px #1f1f1f;">HTTP Zones</span>
<span class="t" style="left:796.00px;top:15px;font-size:11.3px;line-height:16px;color:#1f1f1f;letter-spacing:0.073px;-webkit-text-stroke:0.14px #1f1f1f;">HTTP Upstreams</span>
<span class="t" style="left:900.00px;top:15px;font-size:11.3px;line-height:16px;color:#1f1f1f;letter-spacing:0.148px;-webkit-text-stroke:0.14px #1f1f1f;">Shared Zones</span>
<span class="t" style="left:22.00px;top:63px;font-size:21.4px;line-height:26px;color:#262626;letter-spacing:-0.728px;-webkit-text-stroke:0.55px #fff;">Server Zones</span>
<span class="t" style="left:21.80px;top:219px;font-size:21.4px;line-height:26px;color:#262626;letter-spacing:-0.595px;-webkit-text-stroke:0.55px #fff;">Limit Req</span>
<span class="t" style="left:35.60px;top:104px;font-size:10.3px;line-height:15px;color:#111;font-weight:bold;-webkit-text-stroke:0.18px #111;letter-spacing:0.197px;">Zone</span>
<span class="t" style="left:169.40px;top:104px;font-size:10.3px;line-height:15px;color:#111;font-weight:bold;-webkit-text-stroke:0.18px #111;letter-spacing:0.206px;">Requests</span>
<span class="t" style="left:356.60px;top:104px;font-size:10.3px;line-height:15px;color:#111;font-weight:bold;-webkit-text-stroke:0.18px #111;letter-spacing:-0.019px;">Responses</span>
<span class="t" style="left:672.00px;top:104px;font-size:10.3px;line-height:15px;color:#111;font-weight:bold;-webkit-text-stroke:0.18px #111;letter-spacing:0.432px;">Traffic</span>
<span class="t" style="left:189.90px;top:126px;font-size:8.4px;line-height:13px;color:#333;letter-spacing:0.027px;-webkit-text-stroke:0.14px #333;">Current</span>
<span class="t" style="left:276.20px;top:126px;font-size:8.4px;line-height:13px;color:#333;letter-spacing:0.024px;-webkit-text-stroke:0.14px #333;">Total</span>
<span class="t" style="left:322.70px;top:126px;font-size:8.4px;line-height:13px;color:#333;letter-spacing:-0.348px;-webkit-text-stroke:0.14px #333;">Req/s</span>
<span class="t" style="left:369.20px;top:126px;font-size:8.4px;line-height:13px;color:#333;letter-spacing:-0.373px;-webkit-text-stroke:0.14px #333;">1xx</span>
<span class="t" style="left:445.60px;top:126px;font-size:8.4px;line-height:13px;color:#333;letter-spacing:-0.373px;-webkit-text-stroke:0.14px #333;">2xx</span>
<span class="t" style="left:482.10px;top:126px;font-size:8.4px;line-height:13px;color:#333;letter-spacing:-0.373px;-webkit-text-stroke:0.14px #333;">3xx</span>
<span class="t" style="left:518.60px;top:126px;font-size:8.4px;line-height:13px;color:#333;letter-spacing:-0.373px;-webkit-text-stroke:0.14px #333;">4xx</span>
<span class="t" style="left:570.50px;top:126px;font-size:8.4px;line-height:13px;color:#333;letter-spacing:-0.273px;-webkit-text-stroke:0.14px #333;">5xx</span>
<span class="t" style="left:640.50px;top:126px;font-size:8.4px;line-height:13px;color:#333;letter-spacing:-0.051px;-webkit-text-stroke:0.14px #333;">Total</span>
<span class="t" style="left:720.80px;top:126px;font-size:8.4px;line-height:13px;color:#333;letter-spacing:-0.170px;-webkit-text-stroke:0.14px #333;">Sent/s</span>
<span class="t" style="left:803.50px;top:126px;font-size:8.4px;line-height:13px;color:#333;letter-spacing:-0.122px;-webkit-text-stroke:0.14px #333;">Rcvd/s</span>
<span class="t" style="left:896.80px;top:126px;font-size:8.4px;line-height:13px;color:#333;letter-spacing:-0.378px;-webkit-text-stroke:0.14px #333;">Sent</span>
<span class="t" style="left:979.50px;top:126px;font-size:8.4px;line-height:13px;color:#333;letter-spacing:-0.665px;-webkit-text-stroke:0.14px #333;">Rcvd</span>
<span class="t" style="left:35.40px;top:149px;font-size:10.3px;line-height:15px;color:#111;font-weight:bold;-webkit-text-stroke:0.18px #111;letter-spacing:-0.154px;">req_Dashboard</span>
<span class="t" style="left:211.70px;top:150px;font-size:9.5px;line-height:14px;color:#222;-webkit-text-stroke:0.14px #222;">0</span>
<span class="t" style="left:257.00px;top:150px;font-size:9.5px;line-height:14px;color:#222;letter-spacing:-0.097px;-webkit-text-stroke:0.14px #222;">1852712</span>
<span class="t" style="left:337.90px;top:150px;font-size:9.5px;line-height:14px;color:#222;-webkit-text-stroke:0.14px #222;">0</span>
<span class="t" style="left:375.20px;top:150px;font-size:9.5px;line-height:14px;color:#222;-webkit-text-stroke:0.14px #222;">0</span>
<span class="t" style="left:420.30px;top:150px;font-size:9.5px;line-height:14px;color:#222;letter-spacing:-0.064px;-webkit-text-stroke:0.14px #222;">1844687</span>
<span class="t" style="left:488.10px;top:150px;font-size:9.5px;line-height:14px;color:#222;-webkit-text-stroke:0.14px #222;">0</span>
<span class="t" style="left:524.70px;top:150px;font-size:9.5px;line-height:14px;color:#222;-webkit-text-stroke:0.14px #222;">3</span>
<span class="t" style="left:561.50px;top:150px;font-size:9.5px;line-height:14px;color:#222;letter-spacing:-0.080px;-webkit-text-stroke:0.14px #222;">8022</span>
<span class="t" style="left:621.50px;top:150px;font-size:9.5px;line-height:14px;color:#222;letter-spacing:-0.081px;-webkit-text-stroke:0.14px #222;">1852709</span>
<span class="t" style="left:737.70px;top:150px;font-size:9.5px;line-height:14px;color:#222;-webkit-text-stroke:0.14px #222;">0</span>
<span class="t" style="left:822.80px;top:150px;font-size:9.5px;line-height:14px;color:#222;-webkit-text-stroke:0.14px #222;">0</span>
<span class="t" style="left:877.00px;top:150px;font-size:9.5px;line-height:14px;color:#222;letter-spacing:-0.153px;-webkit-text-stroke:0.14px #222;">1.13 GiB</span>
<span class="t" style="left:959.40px;top:150px;font-size:9.5px;line-height:14px;color:#222;letter-spacing:-0.043px;-webkit-text-stroke:0.14px #222;">88.8 MiB</span>
<span class="t" style="left:54.20px;top:260px;font-size:10.3px;line-height:15px;color:#111;font-weight:bold;-webkit-text-stroke:0.18px #111;letter-spacing:0.330px;">Zone</span>
<span class="t" style="left:155.10px;top:260px;font-size:10.3px;line-height:15px;color:#111;font-weight:bold;-webkit-text-stroke:0.18px #111;letter-spacing:0.084px;">Passed</span>
<span class="t" style="left:267.30px;top:260px;font-size:10.3px;line-height:15px;color:#111;font-weight:bold;-webkit-text-stroke:0.18px #111;letter-spacing:0.450px;">Delayed</span>
<span class="t" style="left:392.50px;top:260px;font-size:10.3px;line-height:15px;color:#111;font-weight:bold;-webkit-text-stroke:0.18px #111;letter-spacing:0.366px;">Rejected</span>
<span class="t" style="left:524.50px;top:260px;font-size:10.3px;line-height:15px;color:#111;font-weight:bold;-webkit-text-stroke:0.18px #111;letter-spacing:0.371px;">Delayed (dry_run)</span>
<span class="t" style="left:764.50px;top:260px;font-size:10.3px;line-height:15px;color:#111;font-weight:bold;-webkit-text-stroke:0.18px #111;letter-spacing:0.295px;">Rejected (dry_run)</span>
<span class="t" style="left:54.20px;top:284px;font-size:10.3px;line-height:15px;color:#111;font-weight:bold;-webkit-text-stroke:0.18px #111;letter-spacing:-0.228px;">2800rs</span>
<span class="t" style="left:217.86px;top:285px;font-size:9.5px;line-height:14px;color:#222;letter-spacing:-0.141px;-webkit-text-stroke:0.14px #222;">1351807</span>
<span class="t" style="left:352.80px;top:285px;font-size:9.5px;line-height:14px;color:#222;letter-spacing:-0.180px;-webkit-text-stroke:0.14px #222;">16131</span>
<span class="t" style="left:490.52px;top:285px;font-size:9.5px;line-height:14px;color:#222;letter-spacing:-0.220px;-webkit-text-stroke:0.14px #222;">8022</span>
<span class="t" style="left:720.08px;top:285px;font-size:9.5px;line-height:14px;color:#222;letter-spacing:-0.157px;-webkit-text-stroke:0.14px #222;">393056</span>
<span class="t" style="left:970.30px;top:285px;font-size:9.5px;line-height:14px;color:#222;letter-spacing:-0.180px;-webkit-text-stroke:0.14px #222;">83696</span>
<span class="t" style="left:54.50px;top:519px;font-size:10.3px;line-height:15px;color:#111;font-weight:bold;-webkit-text-stroke:0.18px #111;letter-spacing:-0.280px;">300rs</span>
<span class="t" style="left:248.40px;top:520px;font-size:9.5px;line-height:14px;color:#222;-webkit-text-stroke:0.14px #222;">0</span>
<span class="t" style="left:373.70px;top:520px;font-size:9.5px;line-height:14px;color:#222;-webkit-text-stroke:0.14px #222;">0</span>
<span class="t" style="left:506.20px;top:520px;font-size:9.5px;line-height:14px;color:#222;-webkit-text-stroke:0.14px #222;">0</span>
<span class="t" style="left:745.70px;top:520px;font-size:9.5px;line-height:14px;color:#222;-webkit-text-stroke:0.14px #222;">0</span>
<span class="t" style="left:991.20px;top:520px;font-size:9.5px;line-height:14px;color:#222;-webkit-text-stroke:0.14px #222;">0</span>
<span class="t" style="left:22.00px;top:561px;font-size:11.9px;line-height:16px;color:#1a1a1a;letter-spacing:-0.131px;-webkit-text-stroke:0.14px #1a1a1a;">© NGINX, Inc. All rights reserved.</span>
<span class="t" style="left:753.84px;top:323px;font-size:9.6px;line-height:14px;color:#222;-webkit-text-stroke:0.14px #222;">1m</span>
<span class="t" style="left:780.04px;top:323px;font-size:9.6px;line-height:14px;color:#222;-webkit-text-stroke:0.14px #222;">5m</span>
<span class="t" style="left:806.26px;top:323px;font-size:9.6px;line-height:14px;color:#222;-webkit-text-stroke:0.14px #222;">15m</span>
<span class="t" style="left:38.10px;top:350px;font-size:9.7px;line-height:14px;color:#555;letter-spacing:-0.121px;-webkit-text-stroke:0.14px #555;">3734</span>
<span class="t" style="left:38.10px;top:403px;font-size:9.7px;line-height:14px;color:#555;letter-spacing:-0.121px;-webkit-text-stroke:0.14px #555;">1867</span>
<span class="t" style="left:53.91px;top:456px;font-size:9.7px;line-height:14px;color:#555;-webkit-text-stroke:0.14px #555;">0</span>
<span class="t" style="left:93.05px;top:471px;font-size:7.5px;line-height:12px;color:#666;letter-spacing:-0.272px;-webkit-text-stroke:0.14px #666;">14:18:00</span>
<span class="t" style="left:246.75px;top:471px;font-size:7.5px;line-height:12px;color:#666;letter-spacing:-0.272px;-webkit-text-stroke:0.14px #666;">14:19:00</span>
<span class="t" style="left:400.45px;top:471px;font-size:7.5px;line-height:12px;color:#666;letter-spacing:-0.272px;-webkit-text-stroke:0.14px #666;">14:20:00</span>
<span class="t" style="left:554.15px;top:471px;font-size:7.5px;line-height:12px;color:#666;letter-spacing:-0.272px;-webkit-text-stroke:0.14px #666;">14:21:00</span>
<span class="t" style="left:707.85px;top:471px;font-size:7.5px;line-height:12px;color:#666;letter-spacing:-0.272px;-webkit-text-stroke:0.14px #666;">14:22:00</span>
<span class="t" style="left:84.80px;top:488px;font-size:8.7px;line-height:13px;color:#4a4a4a;letter-spacing:-0.377px;-webkit-text-stroke:0.14px #4a4a4a;">Passed</span>
<span class="t" style="left:148.20px;top:488px;font-size:8.7px;line-height:13px;color:#4a4a4a;letter-spacing:-0.046px;-webkit-text-stroke:0.14px #4a4a4a;">Delayed</span>
<span class="t" style="left:215.80px;top:488px;font-size:8.7px;line-height:13px;color:#4a4a4a;letter-spacing:-0.071px;-webkit-text-stroke:0.14px #4a4a4a;">Rejected</span>
<span class="t" style="left:285.80px;top:488px;font-size:8.7px;line-height:13px;color:#4a4a4a;letter-spacing:0.061px;-webkit-text-stroke:0.14px #4a4a4a;">Delayed (dry_run)</span>
<span class="t" style="left:391.80px;top:488px;font-size:8.7px;line-height:13px;color:#4a4a4a;-webkit-text-stroke:0.14px #4a4a4a;">Rejected (dry_run)</span>
<span class="t" style="left:562.40px;top:312px;font-size:12.9px;line-height:17px;color:#1a9e1a;-webkit-text-stroke:0.14px #1a9e1a;">1850</span>
<span class="t" style="left:597.30px;top:316px;font-size:9.9px;line-height:14px;color:#4d4d4d;letter-spacing:-0.211px;-webkit-text-stroke:0.14px #4d4d4d;">Passed</span>
<span class="t" style="left:577.00px;top:328px;font-size:12.9px;line-height:17px;color:#f2b10c;letter-spacing:-0.244px;-webkit-text-stroke:0.14px #f2b10c;">64</span>
<span class="t" style="left:597.30px;top:332px;font-size:9.9px;line-height:14px;color:#4d4d4d;letter-spacing:0.061px;-webkit-text-stroke:0.14px #4d4d4d;">Delayed</span>
<span class="t" style="left:583.93px;top:344px;font-size:12.9px;line-height:17px;color:#f20000;-webkit-text-stroke:0.14px #f20000;">3</span>
<span class="t" style="left:597.30px;top:348px;font-size:9.9px;line-height:14px;color:#4d4d4d;letter-spacing:-0.012px;-webkit-text-stroke:0.14px #4d4d4d;">Rejected</span>
<span class="t" style="left:562.40px;top:360px;font-size:12.9px;line-height:17px;color:#9a30f5;letter-spacing:0.322px;-webkit-text-stroke:0.14px #9a30f5;">1177</span>
<span class="t" style="left:597.30px;top:364px;font-size:9.9px;line-height:14px;color:#4d4d4d;letter-spacing:0.147px;-webkit-text-stroke:0.14px #4d4d4d;">Delayed (dry_run)</span>
<span class="t" style="left:570.00px;top:375px;font-size:12.9px;line-height:17px;color:#1212e0;letter-spacing:-0.208px;-webkit-text-stroke:0.14px #1212e0;">456</span>
<span class="t" style="left:597.30px;top:379px;font-size:9.9px;line-height:14px;color:#4d4d4d;letter-spacing:0.083px;-webkit-text-stroke:0.14px #4d4d4d;">Rejected (dry_run)</span>
<span class="t" style="left:562.40px;top:397px;font-size:8.1px;line-height:13px;color:#555;letter-spacing:0.183px;-webkit-text-stroke:0.14px #555;">14:21:48</span>
</div>

</body></html>
